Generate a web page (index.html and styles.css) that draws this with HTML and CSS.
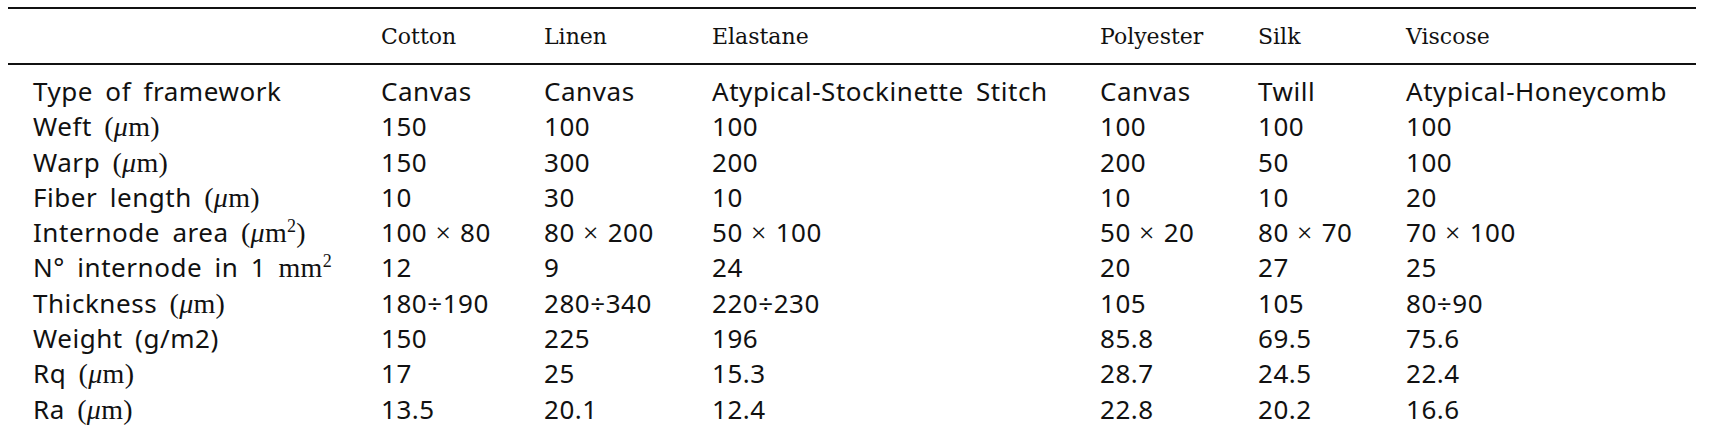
FILE: index.html
```html
<!DOCTYPE html>
<html>
<head>
<meta charset="utf-8">
<link rel="stylesheet" href="styles.css">
</head>
<body>
<table class="tbl">
  <colgroup>
    <col class="c1"><col class="c2"><col class="c3"><col class="c4"><col class="c5"><col class="c6"><col class="c7">
  </colgroup>
  <thead>
    <tr>
      <th class="first"></th>
      <th>Cotton</th>
      <th>Linen</th>
      <th>Elastane</th>
      <th>Polyester</th>
      <th>Silk</th>
      <th>Viscose</th>
    </tr>
  </thead>
  <tbody>
    <tr class="r1">
      <td class="first">Type of framework</td>
      <td>Canvas</td><td>Canvas</td><td>Atypical-Stockinette Stitch</td><td>Canvas</td><td>Twill</td><td>Atypical-Honeycomb</td>
    </tr>
    <tr>
      <td class="first">Weft <span class="m">(<i>μ</i>m)</span></td>
      <td>150</td><td>100</td><td>100</td><td>100</td><td>100</td><td>100</td>
    </tr>
    <tr>
      <td class="first">Warp <span class="m">(<i>μ</i>m)</span></td>
      <td>150</td><td>300</td><td>200</td><td>200</td><td>50</td><td>100</td>
    </tr>
    <tr>
      <td class="first">Fiber length <span class="m">(<i>μ</i>m)</span></td>
      <td>10</td><td>30</td><td>10</td><td>10</td><td>10</td><td>20</td>
    </tr>
    <tr>
      <td class="first">Internode area <span class="m">(<i>μ</i>m<sup>2</sup>)</span></td>
      <td>100<span class="times">×</span>80</td><td>80<span class="times">×</span>200</td><td>50<span class="times">×</span>100</td><td>50<span class="times">×</span>20</td><td>80<span class="times">×</span>70</td><td>70<span class="times">×</span>100</td>
    </tr>
    <tr>
      <td class="first">N° internode in 1 <span class="m">mm<sup>2</sup></span></td>
      <td>12</td><td>9</td><td>24</td><td>20</td><td>27</td><td>25</td>
    </tr>
    <tr>
      <td class="first">Thickness <span class="m">(<i>μ</i>m)</span></td>
      <td>180÷190</td><td>280÷340</td><td>220÷230</td><td>105</td><td>105</td><td>80÷90</td>
    </tr>
    <tr>
      <td class="first">Weight (g/m2)</td>
      <td>150</td><td>225</td><td>196</td><td>85.8</td><td>69.5</td><td>75.6</td>
    </tr>
    <tr>
      <td class="first">Rq <span class="m">(<i>μ</i>m)</span></td>
      <td>17</td><td>25</td><td>15.3</td><td>28.7</td><td>24.5</td><td>22.4</td>
    </tr>
    <tr>
      <td class="first">Ra <span class="m">(<i>μ</i>m)</span></td>
      <td>13.5</td><td>20.1</td><td>12.4</td><td>22.8</td><td>20.2</td><td>16.6</td>
    </tr>
  </tbody>
</table>
</body>
</html>
```

FILE: styles.css
```css
html, body {
  margin: 0;
  padding: 0;
  background: #fff;
}

.tbl {
  margin: 7px 0 0 8px;
  width: 1688px;
  border-collapse: collapse;
  table-layout: fixed;
  color: #111;
  font-family: "Noto Sans", "Open Sans", sans-serif;
}

.c1 { width: 373px; }
.c2 { width: 163px; }
.c3 { width: 168px; }
.c4 { width: 388px; }
.c5 { width: 158px; }
.c6 { width: 148px; }
.c7 { width: 290px; }

.tbl thead th {
  height: 54px;
  padding: 0;
  text-align: left;
  vertical-align: middle;
  font-family: "DejaVu Serif", "Liberation Serif", serif;
  font-weight: normal;
  font-size: 22px;
  border-top: 2px solid #111;
  border-bottom: 2px solid #111;
}

.tbl td {
  padding: 0;
  font-size: 26px;
  line-height: 35.3px;
  letter-spacing: 0.55px;
  word-spacing: 5px;
  white-space: nowrap;
  text-align: left;
  vertical-align: top;
}

.tbl .first {
  padding-left: 25px;
}

.tbl .r1 td {
  padding-top: 9px;
}

.m {
  font-family: "Liberation Serif", "DejaVu Serif", serif;
  font-size: 28px;
  letter-spacing: 0.3px;
  word-spacing: 0;
}

.m i {
  font-style: italic;
}

.m sup {
  font-size: 18px;
  line-height: 0;
  vertical-align: 10px;
}

.times {
  font-family: "Liberation Serif", "DejaVu Serif", serif;
  font-size: 28px;
  letter-spacing: 0;
  margin: 0 9px 0 8px;
}
```
